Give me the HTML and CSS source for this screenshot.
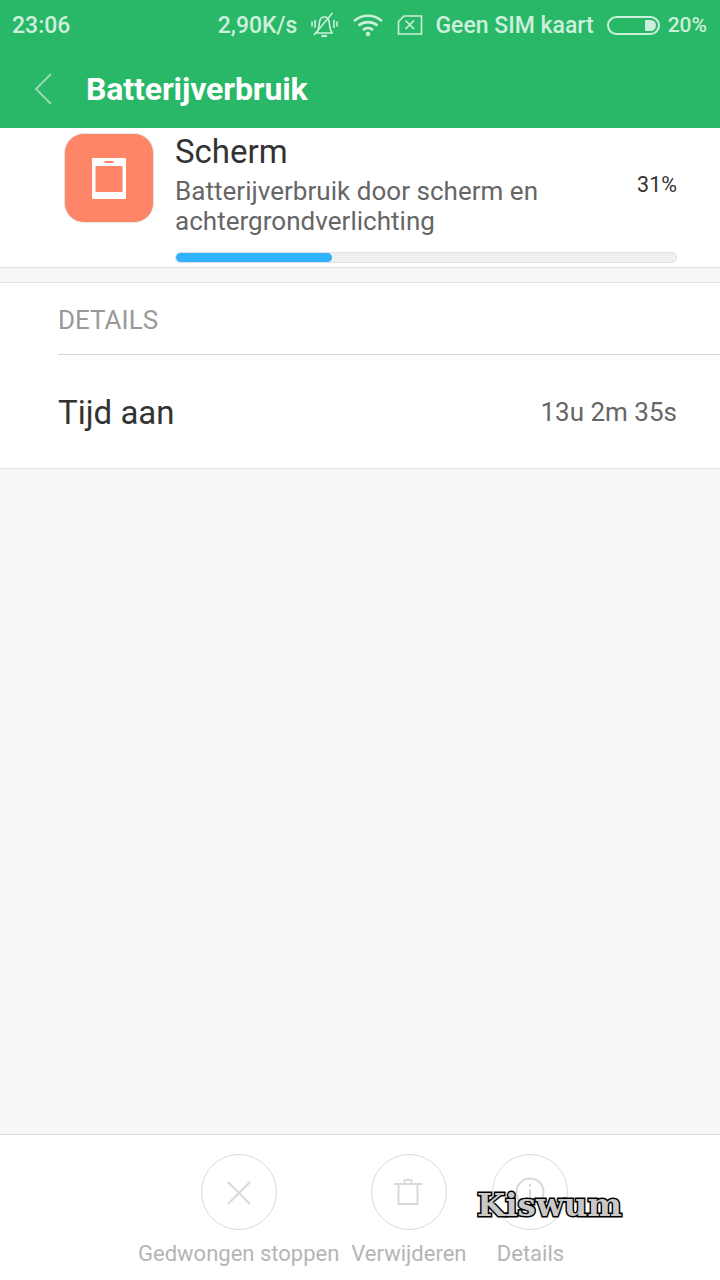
FILE: index.html
```html
<!DOCTYPE html>
<html>
<head>
  <meta charset="utf-8">
  <title>Batterijverbruik</title>
  <link rel="stylesheet" href="styles.css">
</head>
<body>
  <div class="top">
    <div class="status-bar">
      <span class="time">23:06</span>
      <div class="status-right">
        <span class="speed">2,90K/s</span>
        <svg class="ic-bell" width="30" height="26" viewBox="0 0 30 26" fill="none" stroke="currentColor" stroke-width="1.600">
          <path d="M7.500 21 C10 18 10 14 10.500 10 C11 6.500 13 5 15.500 5 C18 5 19.500 6.500 20 9.500 C20.500 13 20.500 17 23 21 Z"/>
          <path d="M12.500 24 H18" stroke-width="2.200"/>
          <path d="M23.500 1 L5 23"/>
          <path d="M6 8 V16 M3 9.500 V14.500 M25 8 V16 M28 9.500 V14.500"/>
        </svg>
        <svg class="ic-wifi" width="32" height="24" viewBox="0 0 32 24" fill="none" stroke="currentColor" stroke-width="2.600">
          <path d="M2 8 C10 1 22 1 30 8"/>
          <path d="M6.500 12.500 C12 8 20 8 25.500 12.500"/>
          <path d="M11 17 C14 14.500 18 14.500 21 17"/>
          <circle cx="16" cy="21" r="2.300" fill="currentColor" stroke="none"/>
        </svg>
        <svg class="ic-sim" width="26" height="22" viewBox="0 0 26 22" fill="none" stroke="currentColor" stroke-width="1.600">
          <path d="M7 2 H24.500 V20 H1.500 V7.500 Z"/>
          <path d="M8.500 6.500 L17 15 M17 6.500 L8.500 15"/>
        </svg>
        <span class="carrier">Geen SIM kaart</span>
        <div class="battery"><div class="battery-fill"></div></div>
        <span class="percent">20%</span>
      </div>
    </div>
    <div class="title-bar">
      <svg class="back" width="18" height="32" viewBox="0 0 18 32" fill="none" stroke="currentColor" stroke-width="2">
        <path d="M17 1 L2 16 L17 31"/>
      </svg>
      <h1>Batterijverbruik</h1>
    </div>
  </div>

  <div class="card">
    <div class="app-icon">
      <svg width="34" height="41" viewBox="0 0 34 41">
        <path fill="#fff" fill-rule="evenodd" d="M1 0 H33 Q34 0 34 1 V40 Q34 41 33 41 H1 Q0 41 0 40 V1 Q0 0 1 0 Z M3.500 8 V34 H30.500 V8 Z M12.500 3 V5 H21.500 V3 Z"/>
      </svg>
    </div>
    <div class="card-body">
      <div class="card-row">
        <div class="card-text">
          <div class="card-title">Scherm</div>
          <div class="card-desc">Batterijverbruik door scherm en achtergrondverlichting</div>
        </div>
        <div class="card-pct">31%</div>
      </div>
      <div class="progress"><div class="progress-bar" style="width: 31.200%"></div></div>
    </div>
  </div>

  <div class="details">
    <div class="details-head">DETAILS</div>
    <div class="details-row">
      <span class="row-label">Tijd aan</span>
      <span class="row-value">13u 2m 35s</span>
    </div>
  </div>

  <div class="spacer"></div>

  <div class="footer">
    <div class="action">
      <div class="circle">
        <svg width="26" height="26" viewBox="1 0 26 26" fill="none" stroke="#d9d9d9" stroke-width="2">
          <path d="M3 3 L25 25 M25 3 L3 25"/>
        </svg>
      </div>
      <span>Gedwongen stoppen</span>
    </div>
    <div class="action">
      <div class="circle">
        <svg width="30" height="28" viewBox="1.500 0 30 28" fill="none" stroke="#d9d9d9" stroke-width="2">
          <path d="M1 6 H30 M6 6 V26 H25 V6 M12 6 V2 H19 V6"/>
        </svg>
      </div>
      <span>Verwijderen</span>
    </div>
    <div class="action action-last">
      <div class="circle">
        <svg width="30" height="30" viewBox="0 0 30 30" fill="none" stroke="#d9d9d9" stroke-width="2">
          <circle cx="15" cy="15" r="13.500"/>
          <path d="M15 12 V23 M15 7 V9.500"/>
        </svg>
      </div>
      <span>Details</span>
    </div>
  </div>

  <div class="watermark">Kiswum</div>
</body>
</html>
```

FILE: styles.css
```css
html, body {
  height: 100%;
}

body {
  margin: 0;
  display: flex;
  flex-direction: column;
  position: relative;
  overflow: hidden;
  background: #f7f7f7;
  color: #333;
  font-family: Roboto, 'Noto Sans', sans-serif;
}

.top {
  height: 128px;
  background: #29b868;
}

.status-bar {
  height: 50px;
  padding: 0 13px 0 12px;
  display: flex;
  justify-content: space-between;
  align-items: center;
  color: #cdf0dc;
  font-size: 23px;
  font-weight: 500;
}

.status-right {
  display: flex;
  align-items: center;
}

.ic-bell {
  margin-left: 12px;
}

.ic-wifi {
  margin-left: 13px;
}

.ic-sim {
  margin-left: 13px;
}

.carrier {
  margin-left: 12px;
}

.battery {
  width: 53px;
  height: 19px;
  margin-left: 13px;
  border: 2px solid #cdf0dc;
  border-radius: 10px;
  box-sizing: border-box;
  padding: 2px;
  display: flex;
  justify-content: flex-end;
}

.battery-fill {
  width: 11px;
  background: #cdf0dc;
  border-radius: 1px 6px 6px 1px;
}

.percent {
  margin-left: 8px;
  font-size: 21px;
}

.title-bar {
  height: 78px;
  display: flex;
  align-items: center;
  padding-left: 34px;
  color: #fff;
}

.back {
  color: #93dcb3;
}

.title-bar h1 {
  margin: 0 0 0 34px;
  font-size: 32px;
  font-weight: 700;
  letter-spacing: -0.1px;
  color: #fff;
}

.card {
  height: 139px;
  background: #fff;
  border-bottom: 1px solid #e2e2e2;
  display: flex;
  padding: 0 43px 0 64px;
}

.app-icon {
  width: 90px;
  height: 90px;
  margin-top: 5px;
  border: 1px solid #e4e4e4;
  box-sizing: border-box;
  border-radius: 20px;
  background: #fe8568;
  display: flex;
  justify-content: center;
  align-items: center;
}

.card-body {
  flex: 1;
  margin-left: 21px;
}

.card-row {
  display: flex;
  align-items: center;
  justify-content: space-between;
}

.card-title {
  font-size: 33px;
  line-height: 47px;
  color: #333;
}

.card-desc {
  width: 420px;
  margin-top: 1px;
  font-size: 26px;
  line-height: 30px;
  letter-spacing: 0.03px;
  color: #666;
}

.card-pct {
  font-size: 21.500px;
  margin-top: 5px;
  color: #333;
}

.progress {
  height: 9px;
  margin-top: 16px;
  background: #f0f0f0;
  border: 1px solid #e0e0e0;
  border-radius: 5px;
  overflow: hidden;
  box-sizing: content-box;
}

.progress-bar {
  height: 100%;
  background: #2fb1fb;
  border-radius: 5px;
}

.details {
  margin-top: 14px;
  background: #fff;
  border-top: 1px solid #e2e2e2;
  border-bottom: 1px solid #e2e2e2;
  padding-left: 58px;
}

.details-head {
  height: 71px;
  line-height: 74px;
  font-size: 26px;
  color: #999;
  border-bottom: 1px solid #d8d8d8;
}

.details-row {
  height: 113px;
  padding-right: 43px;
  display: flex;
  justify-content: space-between;
  align-items: center;
}

.row-label {
  font-size: 33px;
  margin-top: 2px;
  color: #333;
}

.row-value {
  font-size: 26px;
  color: #666;
}

.spacer {
  flex: 1;
}

.footer {
  height: 145px;
  background: #fff;
  border-top: 1px solid #d8d8d8;
  display: flex;
  padding-left: 138px;
  gap: 12px;
}

.action {
  display: flex;
  flex-direction: column;
  align-items: center;
  padding-top: 19px;
  font-size: 22px;
  color: #b5b5b5;
}

.action-last {
  margin-left: 14px;
}

.circle {
  width: 76px;
  height: 76px;
  box-sizing: border-box;
  border: 1px solid #d9d9d9;
  border-radius: 50%;
  display: flex;
  justify-content: center;
  align-items: center;
  margin-bottom: 11px;
}

.watermark {
  position: absolute;
  left: 477px;
  top: 1187px;
  font-family: 'DejaVu Serif', serif;
  font-size: 32.500px;
  font-weight: 700;
  line-height: 36px;
  color: #c8c8c8;
  -webkit-text-stroke: 3px #000;
  paint-order: stroke fill;
}
```
